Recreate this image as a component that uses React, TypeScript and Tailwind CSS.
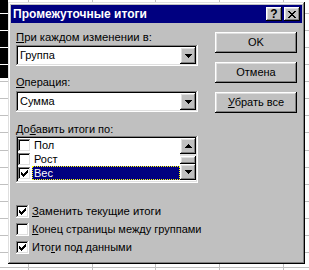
import React from "react";

const RAISED =
  "shadow-[inset_-1px_-1px_#000,inset_1px_1px_#fff,inset_-2px_-2px_#808080,inset_2px_2px_#dfdfdf]";
const SUNKEN =
  "shadow-[inset_-1px_-1px_#fff,inset_1px_1px_#808080,inset_-2px_-2px_#dfdfdf,inset_2px_2px_#000]";

function Tri({ up }: { up?: boolean }) {
  const rows = up ? [1, 3, 5, 7] : [7, 5, 3, 1];
  return (
    <svg width="7" height="4" shapeRendering="crispEdges">
      {rows.map((w, i) => (
        <rect key={i} x={(7 - w) / 2} y={i} width={w} height={1} fill="#000" />
      ))}
    </svg>
  );
}

const CHECK = ["......X", ".....XX", "X...XXX", "XX.XXX.", "XXXXX..", ".XXX...", "..X...."];
const XG = ["XX....XX", ".XX..XX.", "..XXXX..", "...XX...", "..XXXX..", ".XX..XX.", "XX....XX"];

function Pix({ map, w, h }: { map: string[]; w: number; h: number }) {
  const rects: React.ReactNode[] = [];
  map.forEach((row, y) =>
    row.split("").forEach((c, x) => {
      if (c === "X") rects.push(<rect key={x + "-" + y} x={x} y={y} width={1} height={1} fill="#000" />);
    })
  );
  return (
    <svg width={w} height={h} shapeRendering="crispEdges">
      {rects}
    </svg>
  );
}

function Check({ on }: { on?: boolean }) {
  return (
    <div className={`w-[13px] h-[13px] shrink-0 bg-white flex items-center justify-center ${SUNKEN}`}>
      {on ? <Pix map={CHECK} w={7} h={7} /> : null}
    </div>
  );
}

function U({ children }: { children: React.ReactNode }) {
  return <span className="underline decoration-1 underline-offset-[1px]">{children}</span>;
}

function Combo({ value }: { value: string }) {
  return (
    <div className={`h-[21px] bg-white p-[2px] flex ${SUNKEN}`}>
      <div className="flex-1 flex items-center pl-[2px]">{value}</div>
      <div className={`w-[16px] h-[17px] bg-[#c0c0c0] flex items-center justify-center ${RAISED}`}>
        <Tri />
      </div>
    </div>
  );
}

function Btn({ children }: { children: React.ReactNode }) {
  return (
    <div className={`h-[21px] w-[82px] bg-[#c0c0c0] flex items-center justify-center ${RAISED}`}>
      {children}
    </div>
  );
}

function ListRow({ label, on, sel }: { label: string; on?: boolean; sel?: boolean }) {
  return (
    <div className="h-[14px] flex items-center">
      <Check on={on} />
      <div
        className={
          sel
            ? "ml-[1px] flex-1 h-[14px] flex items-center pl-[1px] bg-[#000080] text-white border border-dotted border-[#ffff00]"
            : "ml-[1px] flex-1 h-[14px] flex items-center pl-[2px]"
        }
      >
        {label}
      </div>
    </div>
  );
}

export default function App() {
  const rows = [13, 30, 47, 64, 81, 98, 115, 132, 150, 167, 184, 201, 218, 235, 252, 267];
  const cols = [28, 92, 155, 219, 283];
  return (
    <div className="relative w-[309px] h-[270px] overflow-hidden bg-white font-['Liberation_Sans',Arial,sans-serif] text-[11px] leading-[13px] text-black">
      <svg className="absolute left-0 top-0" width="309" height="270" shapeRendering="crispEdges">
        {cols.map((x) => (
          <rect key={"c" + x} x={x} y={0} width={1} height={270} fill="#c0c0c0" />
        ))}
        {rows.map((y) => (
          <rect key={"r" + y} x={0} y={y} width={309} height={1} fill="#c0c0c0" />
        ))}
        <rect x={0} y={0} width={8} height={78} fill="#000" />
        {rows
          .filter((y) => y < 78)
          .map((y) => (
            <rect key={"w" + y} x={0} y={y} width={8} height={1} fill="#fff" />
          ))}
      </svg>

      <div className="absolute left-[8px] top-[2px] w-[297px] h-[262px] bg-[#c0c0c0] p-[3px] flex flex-col shadow-[inset_-1px_-1px_#000,inset_1px_1px_#dfdfdf,inset_-2px_-2px_#808080,inset_2px_2px_#fff]">
        <div className="h-[18px] bg-[#000080] flex items-center pl-[2px] pr-[2px]">
          <span className="text-white font-bold text-[12px] leading-[14px]">Промежуточные итоги</span>
          <div className="ml-auto flex gap-[2px]">
            <div className={`w-[16px] h-[14px] bg-[#c0c0c0] flex items-center justify-center font-bold text-[12px] leading-[12px] ${RAISED}`}>
              ?
            </div>
            <div className={`w-[16px] h-[14px] bg-[#c0c0c0] flex items-center justify-center ${RAISED}`}>
              <Pix map={XG} w={8} h={7} />
            </div>
          </div>
        </div>

        <div className="flex pl-[5px]">
          <div className="w-[182px] flex flex-col">
            <div className="mt-[8px] h-[13px] text-[11.3px]">
              <U>П</U>ри каждом изменении в:
            </div>
            <div className="mt-[1px]">
              <Combo value="Группа" />
            </div>
            <div className="mt-[10px] h-[13px]">
              <U>О</U>перация:
            </div>
            <div className="mt-[2px]">
              <Combo value="Сумма" />
            </div>
            <div className="mt-[11px] h-[13px]">
              До<U>б</U>авить итоги по:
            </div>
            <div className={`h-[47px] bg-white p-[2px] flex ${SUNKEN}`}>
              <div className="flex-1 flex flex-col">
                <ListRow label="Пол" />
                <ListRow label="Рост" />
                <ListRow label="Вес" on sel />
              </div>
              <div className="w-[16px] flex flex-col">
                <div className={`h-[16px] bg-[#c0c0c0] flex items-center justify-center ${RAISED}`}>
                  <Tri up />
                </div>
                <div className="h-[2px] bg-[#e0e0e0]" />
                <div className={`h-[8px] bg-[#c0c0c0] ${RAISED}`} />
                <div className={`h-[16px] bg-[#c0c0c0] flex items-center justify-center ${RAISED}`}>
                  <Tri />
                </div>
              </div>
            </div>
            <div className="mt-[19px] flex flex-col">
              <div className="h-[18px] flex items-center gap-[3px]">
                <Check on />
                <span className="text-[11.3px]">
                  <U>З</U>аменить текущие итоги
                </span>
              </div>
              <div className="h-[18px] flex items-center gap-[3px]">
                <Check />
                <span className="whitespace-nowrap">
                  <U>К</U>онец страницы между группами
                </span>
              </div>
              <div className="h-[18px] flex items-center gap-[3px]">
                <Check on />
                <span>
                  Ито<U>г</U>и под данными
                </span>
              </div>
            </div>
          </div>

          <div className="ml-[17px] flex flex-col">
            <div className="mt-[9px]">
              <Btn>OK</Btn>
            </div>
            <div className="mt-[9px]">
              <Btn>Отмена</Btn>
            </div>
            <div className="mt-[9px]">
              <Btn>
                <span>
                  <U>У</U>брать все
                </span>
              </Btn>
            </div>
          </div>
        </div>
      </div>
    </div>
  );
}
